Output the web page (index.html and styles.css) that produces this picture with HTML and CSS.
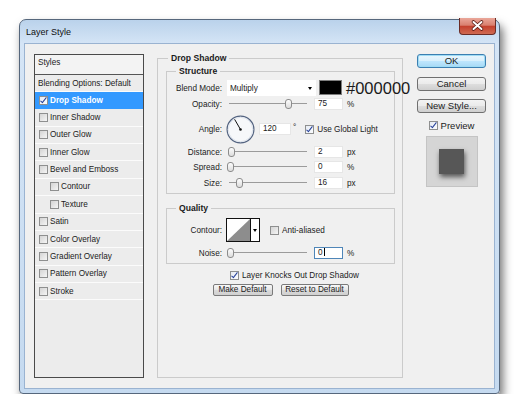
FILE: index.html
```html
<!DOCTYPE html>
<html lang="en">
<head>
    <meta charset="UTF-8">
    <title>Layer Style</title>
    <link rel="stylesheet" href="styles.css">
</head>
<body>
    <div class="window">
        <div class="titlebar">
            <span class="title">Layer Style</span>
            <div class="close-btn">
                <svg width="35" height="15" viewBox="0 0 35 15">
                    <path d="M13.5 4 L21.5 11 M21.5 4 L13.5 11" stroke="#5a1a12" stroke-width="3.6" stroke-linecap="round"/>
                    <path d="M13.5 4 L21.5 11 M21.5 4 L13.5 11" stroke="#fff" stroke-width="2" stroke-linecap="round"/>
                </svg>
            </div>
        </div>
        <div class="client">
            <!-- styles list -->
            <div class="styles-list">
                <div class="list-head">Styles</div>
                <div class="list-row blending">Blending Options: Default</div>
                <div class="list-row selected"><span class="cb on"></span>Drop Shadow</div>
                <div class="list-row"><span class="cb"></span>Inner Shadow</div>
                <div class="list-row"><span class="cb"></span>Outer Glow</div>
                <div class="list-row"><span class="cb"></span>Inner Glow</div>
                <div class="list-row"><span class="cb"></span>Bevel and Emboss</div>
                <div class="list-row indent"><span class="cb"></span>Contour</div>
                <div class="list-row indent"><span class="cb"></span>Texture</div>
                <div class="list-row"><span class="cb"></span>Satin</div>
                <div class="list-row"><span class="cb"></span>Color Overlay</div>
                <div class="list-row"><span class="cb"></span>Gradient Overlay</div>
                <div class="list-row"><span class="cb"></span>Pattern Overlay</div>
                <div class="list-row"><span class="cb"></span>Stroke</div>
            </div>

            <!-- drop shadow settings -->
            <fieldset class="group main-group">
                <legend>Drop Shadow</legend>
                <fieldset class="group sub-group">
                    <legend>Structure</legend>
                    <div class="row row-blend">
                        <span class="label">Blend Mode:</span>
                        <div class="select">Multiply<span class="arrow"></span></div>
                        <div class="swatch"></div>
                        <span class="hex">#000000</span>
                    </div>
                    <div class="row row-opacity">
                        <span class="label">Opacity:</span>
                        <div class="slider"><span class="thumb" style="left: 56px"></span></div>
                        <div class="field">75</div>
                        <span class="unit">%</span>
                    </div>
                    <div class="row row-angle">
                        <span class="label">Angle:</span>
                        <svg class="dial" width="29" height="29" viewBox="0 0 29 29">
                            <circle cx="14.5" cy="14.5" r="13.4" fill="#f7f8fa" stroke="#52627f" stroke-width="1.2"/>
                            <circle cx="14.5" cy="14.5" r="12.2" fill="none" stroke="#dde3ec" stroke-width="1"/>
                            <line x1="14.5" y1="14.5" x2="8.6" y2="4.3" stroke="#111" stroke-width="1"/>
                            <circle cx="14.5" cy="14.5" r="1.3" fill="#111"/>
                        </svg>
                        <div class="field field-angle">120</div>
                        <span class="degree">°</span>
                        <span class="cb on"></span>
                        <span class="cb-text">Use Global Light</span>
                    </div>
                    <div class="row row-distance">
                        <span class="label">Distance:</span>
                        <div class="slider"><span class="thumb" style="left: -1px"></span></div>
                        <div class="field">2</div>
                        <span class="unit">px</span>
                    </div>
                    <div class="row row-spread">
                        <span class="label">Spread:</span>
                        <div class="slider"><span class="thumb" style="left: -2px"></span></div>
                        <div class="field">0</div>
                        <span class="unit">%</span>
                    </div>
                    <div class="row row-size">
                        <span class="label">Size:</span>
                        <div class="slider"><span class="thumb" style="left: 7px"></span></div>
                        <div class="field">16</div>
                        <span class="unit">px</span>
                    </div>
                </fieldset>

                <fieldset class="group sub-group quality">
                    <legend>Quality</legend>
                    <div class="row row-contour">
                        <span class="label">Contour:</span>
                        <svg class="contour" width="25" height="24" viewBox="0 0 25 24">
                            <rect x="0.5" y="0.5" width="24" height="23" fill="#fff" stroke="#111"/>
                            <polygon points="1,23 24,1 24,23" fill="#8d8d8d"/>
                        </svg>
                        <div class="contour-arrow"><span class="arrow"></span></div>
                        <span class="cb"></span>
                        <span class="cb-text">Anti-aliased</span>
                    </div>
                    <div class="row row-noise">
                        <span class="label">Noise:</span>
                        <div class="slider"><span class="thumb" style="left: -2px"></span></div>
                        <div class="field focus">0<span class="caret"></span></div>
                        <span class="unit">%</span>
                    </div>
                </fieldset>

                <div class="knock-row">
                    <span class="cb on"></span>
                    <span class="cb-text">Layer Knocks Out Drop Shadow</span>
                </div>
                <div class="default-btns">
                    <div class="small-btn btn-make">Make Default</div>
                    <div class="small-btn btn-reset">Reset to Default</div>
                </div>
            </fieldset>

            <!-- dialog buttons -->
            <div class="side">
                <div class="btn btn-ok">OK</div>
                <div class="btn">Cancel</div>
                <div class="btn">New Style...</div>
                <div class="preview-check">
                    <span class="cb on"></span>
                    <span class="cb-text">Preview</span>
                </div>
                <div class="preview-box">
                    <div class="preview-square"></div>
                </div>
            </div>
        </div>
    </div>
</body>
</html>
```

FILE: styles.css
```css
body{
    margin: 0;
    background-color: #fff;
    font-family: "Liberation Sans", Arial, sans-serif;
    font-size: 8.2px;
    color: #1b1b1b;
}

.window{
    box-sizing: border-box;
    display: flex;
    flex-direction: column;
    margin: 19px 0 0 19px;
    width: 481px;
    height: 375px;
    border: 1px solid #56677c;
    border-radius: 7px 7px 4px 4px;
    background: linear-gradient(#bad2eb, #d5e5f6 24px, #c5daf0);
    box-shadow: 3px 6px 10px rgba(0, 0, 0, 0.55);
}

.titlebar{
    display: flex;
    align-items: flex-start;
    flex-shrink: 0;
    height: 23px;
}

.title{
    margin: 7px 0 0 6px;
    font-size: 9px;
    line-height: 11px;
    color: #111;
}

.close-btn{
    box-sizing: border-box;
    margin: -2px 3px 0 auto;
    width: 37px;
    height: 17px;
    border: 1px solid #6a2c26;
    border-top: none;
    border-radius: 0 0 4px 4px;
    background: linear-gradient(#eaa79a, #d9806f 45%, #c4412e 52%, #cf6a52);
}

.close-btn svg{
    display: block;
}

.client{
    flex: 1;
    display: flex;
    align-items: flex-start;
    margin: 0 4px 4px;
    border: 1px solid #9ab3d1;
    padding: 10px 0 0 9px;
    background-color: #f0f0f0;
}

/* styles list */
.styles-list{
    box-sizing: border-box;
    flex-shrink: 0;
    width: 110px;
    height: 324px;
    border: 1px solid #4a4a4a;
    background-color: #ececec;
}

.list-head{
    box-sizing: border-box;
    height: 20px;
    padding: 3px 0 0 3px;
    border-bottom: 1px solid #555;
    line-height: 10px;
    background-color: #f3f3f3;
}

.list-row{
    box-sizing: border-box;
    display: flex;
    align-items: center;
    height: 17.36px;
    padding-left: 4px;
    border-bottom: 1px solid #fbfbfb;
}

.list-row.blending{
    height: 17px;
    padding-left: 3px;
}

.list-row.indent{
    padding-left: 15px;
}

.list-row.selected{
    border-bottom-color: #3399ff;
    font-weight: 700;
    color: #fff;
    background-color: #3399ff;
}

.list-row .cb{
    margin-right: 2px;
}

/* checkbox */
.cb{
    position: relative;
    box-sizing: border-box;
    flex-shrink: 0;
    display: inline-block;
    width: 9px;
    height: 9px;
    border: 1px solid #8e8f8f;
    background: linear-gradient(135deg, #d4d4d4, #f5f5f5);
}

.cb.on{
    background: linear-gradient(135deg, #e6ebf3, #fbfcfe);
}

.cb.on::after{
    content: "";
    position: absolute;
    left: 2px;
    top: -1px;
    width: 2px;
    height: 6px;
    border: solid #26409a;
    border-width: 0 1.5px 1.5px 0;
    transform: rotate(38deg);
}

.cb-text{
    margin-left: 3px;
}

/* group boxes */
.group{
    box-sizing: border-box;
    margin: 0;
    min-width: 0;
    border: 1px solid #cbcbcb;
}

.group legend{
    padding: 0 3px;
    font-size: 8.6px;
    font-weight: 700;
    line-height: 9px;
}

.main-group{
    flex-shrink: 0;
    margin-left: 13px;
    padding: 4px 7px 0 8px;
    width: 246px;
    height: 324px;
}

.main-group > legend{
    margin-left: 2px;
}

.sub-group{
    width: 229px;
    padding: 4px 0;
}

.sub-group > legend{
    margin-left: 9px;
}

.quality{
    margin-top: 10px;
}

/* rows */
.row{
    display: flex;
    align-items: center;
    height: 12px;
    white-space: nowrap;
}

.row > *{
    flex-shrink: 0;
}

.label{
    width: 55px;
    text-align: right;
}

.row-blend{
    height: 16px;
}

.row-opacity{
    margin-top: 2px;
}

.row-angle{
    margin-top: 5px;
    height: 28px;
}

.row-distance,
.row-spread{
    margin-top: 3px;
}

.row-size{
    margin-top: 4px;
}

.row-contour{
    margin-top: 1px;
    height: 24px;
}

.row-noise{
    margin-top: 5px;
}

.select{
    box-sizing: border-box;
    display: flex;
    align-items: center;
    margin-left: 5px;
    padding-left: 3px;
    width: 89px;
    height: 16px;
    background-color: #fff;
}

.select .arrow{
    margin-left: auto;
    margin-right: 4px;
}

.arrow{
    display: inline-block;
    width: 0;
    height: 0;
    border-left: 2.5px solid transparent;
    border-right: 2.5px solid transparent;
    border-top: 3px solid #000;
}

.swatch{
    box-sizing: border-box;
    margin-left: 3px;
    align-self: flex-start;
    width: 23px;
    height: 15px;
    border: 1px solid #7d7d7d;
    background-color: #000;
}

.hex{
    margin-left: 4px;
    font-size: 16.5px;
    line-height: 16px;
    color: #1a1a1a;
}

.slider{
    position: relative;
    margin-left: 7px;
    width: 78px;
    height: 12px;
}

.slider::before{
    content: "";
    display: block;
    margin-top: 5px;
    height: 1px;
    background-color: #9b9b9b;
}

.thumb{
    position: absolute;
    top: 1px;
    box-sizing: border-box;
    width: 7px;
    height: 10px;
    border: 1px solid #8c8c8c;
    border-radius: 3px;
    background: linear-gradient(#fdfdfd, #dcdcdc);
}

.field{
    box-sizing: border-box;
    margin-left: 7px;
    padding-left: 3px;
    width: 29px;
    height: 12px;
    border: 1px solid #e6e6e6;
    line-height: 10px;
    background-color: #fff;
}

.field.focus{
    border-color: #4f86b8;
}

.caret{
    display: inline-block;
    margin-left: 1px;
    width: 1px;
    height: 8px;
    vertical-align: -1px;
    background-color: #000;
}

.unit{
    margin-left: 4px;
}

.dial{
    margin-left: 4px;
}

.field-angle{
    margin-left: 4px;
    width: 32px;
}

.degree{
    align-self: flex-start;
    margin: 9px 9px 0 2px;
    line-height: 8px;
}

.contour{
    margin-left: 4px;
}

.contour-arrow{
    box-sizing: border-box;
    display: flex;
    align-items: center;
    justify-content: center;
    margin-right: 10px;
    width: 9px;
    height: 24px;
    border: 1px solid #111;
    border-left: none;
    background-color: #fff;
}

.knock-row{
    display: flex;
    align-items: center;
    margin: 6px 0 0 64px;
    height: 10px;
    white-space: nowrap;
}

.default-btns{
    display: flex;
    justify-content: center;
    gap: 8px;
    margin-top: 4px;
    width: 229px;
}

.small-btn{
    box-sizing: border-box;
    height: 12px;
    border: 1px solid #7a7a7a;
    border-radius: 2px;
    line-height: 10px;
    text-align: center;
    background: linear-gradient(#f8f8f8, #e6e6e6 50%, #dadada 51%, #d0d0d0);
}

.btn-make{
    width: 60px;
}

.btn-reset{
    width: 68px;
}

/* dialog buttons */
.side{
    flex-shrink: 0;
    display: flex;
    flex-direction: column;
    align-items: center;
    margin-left: 14px;
    width: 69px;
    font-size: 9.5px;
}

.btn{
    box-sizing: border-box;
    width: 69px;
    height: 14px;
    margin-top: 8px;
    border: 1px solid #707070;
    border-radius: 3px;
    line-height: 12px;
    text-align: center;
    background: linear-gradient(#f3f3f3, #ebebeb 48%, #dddddd 52%, #cfcfcf);
}

.btn-ok{
    margin-top: 0;
    border-color: #3c7fb1;
    box-shadow: inset 0 0 0 1px #9fdcf5;
    background: linear-gradient(#eaf6fd, #d9f0fc 48%, #bee6fd 52%, #a7d9f5);
}

.btn-ok + .btn{
    margin-top: 9px;
}

.preview-check{
    display: flex;
    align-items: center;
    margin-top: 7px;
    height: 10px;
}

.preview-box{
    box-sizing: border-box;
    display: flex;
    align-items: center;
    justify-content: center;
    margin-top: 6px;
    width: 52px;
    height: 51px;
    border: 1px solid #c4c4c4;
    background-color: #d5d5d5;
}

.preview-square{
    width: 25px;
    height: 25px;
    background-color: #575757;
    box-shadow: 1px 3px 5px rgba(0, 0, 0, 0.6);
}
```
